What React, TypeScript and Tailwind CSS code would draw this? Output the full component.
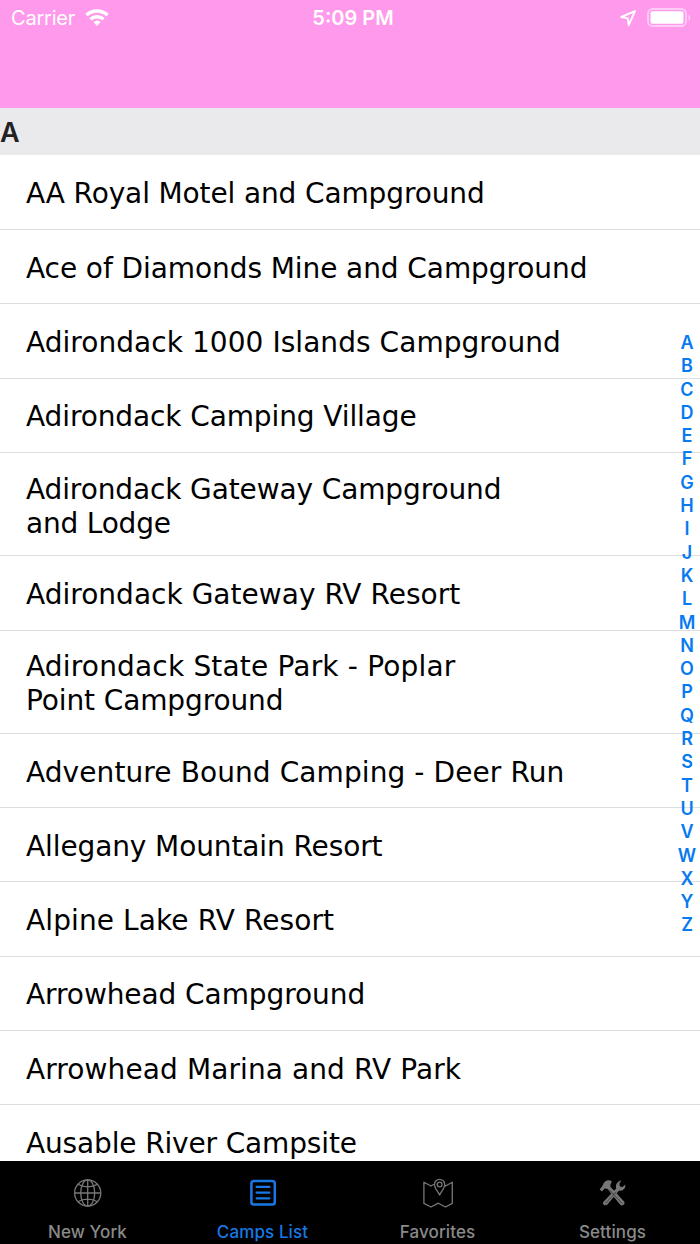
import { useState } from 'react';

interface Line {
  text: string;
  tracking: string;
}

const camps: Line[][] = [
  [{ text: 'AA Royal Motel and Campground', tracking: 'tracking-[-0.13px]' }],
  [{ text: 'Ace of Diamonds Mine and Campground', tracking: 'tracking-[-0.08px]' }],
  [{ text: 'Adirondack 1000 Islands Campground', tracking: 'tracking-[0.05px]' }],
  [{ text: 'Adirondack Camping Village', tracking: 'tracking-[-0.11px]' }],
  [
    { text: 'Adirondack Gateway Campground', tracking: 'tracking-[-0.12px]' },
    { text: 'and Lodge', tracking: 'tracking-[-0.2px]' },
  ],
  [{ text: 'Adirondack Gateway RV Resort', tracking: 'tracking-[0.02px]' }],
  [
    { text: 'Adirondack State Park - Poplar', tracking: 'tracking-[0.18px]' },
    { text: 'Point Campground', tracking: 'tracking-[-0.12px]' },
  ],
  [{ text: 'Adventure Bound Camping - Deer Run', tracking: 'tracking-[0.09px]' }],
  [{ text: 'Allegany Mountain Resort', tracking: 'tracking-[-0.11px]' }],
  [{ text: 'Alpine Lake RV Resort', tracking: 'tracking-[0.1px]' }],
  [{ text: 'Arrowhead Campground', tracking: 'tracking-[-0.08px]' }],
  [{ text: 'Arrowhead Marina and RV Park', tracking: 'tracking-[0.1px]' }],
  [{ text: 'Ausable River Campsite', tracking: 'tracking-[-0.15px]' }],
];

const letters = 'ABCDEFGHIJKLMNOPQRSTUVWXYZ'.split('');

const GlobeIcon = () => (
  <svg width="30" height="30" viewBox="0 0 30 30" fill="none" stroke="currentColor" strokeWidth="1.3">
    <circle cx="14.7" cy="15" r="13.1" />
    <ellipse cx="14.7" cy="15" rx="7" ry="13.1" />
    <path d="M14.7 2v26M1.7 15h26M5 6.3c5.4 3.4 14 3.4 19.4 0M5 23.7c5.4-3.4 14-3.4 19.4 0" />
  </svg>
);

const ListIcon = () => (
  <svg width="30" height="30" viewBox="0 0 30 30" fill="none" stroke="currentColor" strokeWidth="2.5">
    <rect x="3.4" y="3" width="23.4" height="23.6" rx="2.6" />
    <path d="M8.6 8.9h12.8M8.6 14.7h12.8M8.6 20.3h12.8" strokeLinecap="round" strokeWidth="2.2" />
  </svg>
);

const MapIcon = () => (
  <svg width="30" height="30" viewBox="0 0 30 30" fill="none" stroke="currentColor" strokeWidth="1.3" strokeLinejoin="round">
    <path d="M10.8 6.2L8 8 .9 4.2v21.2L8 29l7.3-3.8 7.2 3.8 6.8-3.6V4.2L22.5 8 21.4 7" />
    <path d="M16.6 17c-1.2-3-5.1-6.4-5.1-10.6a5.1 5.1 0 0 1 10.2 0c0 4.2-3.9 7.6-5.1 10.6z" />
    <circle cx="16.6" cy="6.5" r="2.4" />
  </svg>
);

const ToolsIcon = () => (
  <svg width="30" height="30" viewBox="0 0 30 30" fill="currentColor">
    <path d="M1.6 11.4L4 13.4l2.5-2.9 2.8.3 12.8 15.8c1.8 2.6 5.8-.6 4-3L12.4 8.8l.1-2.2 1.4-3.3C10.2 1.3 7.6 2.6 5.6 5.2L4.3 8.3z" />
    <path d="M5.7 23.5L18.2 10.6c-1-4.1 1.3-7.5 5-8L21.4 5.8l.5 2.8 2.7.4 2.6-2.4c.7 4-2.5 6.9-6.1 5.9L9.6 26.2c-2.4 2.7-6.3-.1-3.9-2.7z" />
    <path d="M11 11.5l13.4 14M7.3 25.5l11.1-11.8" stroke="black" strokeOpacity=".65" strokeWidth=".7" fill="none" />
  </svg>
);

const tabs = [
  { name: 'New York', icon: GlobeIcon },
  { name: 'Camps List', icon: ListIcon },
  { name: 'Favorites', icon: MapIcon },
  { name: 'Settings', icon: ToolsIcon },
];

function StatusBar() {
  return (
    <div className="grid h-9 grid-cols-3 items-center text-white font-['Inter',sans-serif]">
      <div className="flex items-center gap-[10px] pl-[11px] text-[20px]">
        <span className="tracking-[-0.2px]">Carrier</span>
        <svg width="24" height="18" viewBox="0 0 24 18" fill="currentColor">
          <path d="M.3 4.8a17 17 0 0 1 23.4 0L21.4 7.6a13.6 13.6 0 0 0-18.8 0z" />
          <path d="M4.3 9a11.2 11.2 0 0 1 15.4 0l-2.3 2.6a7.9 7.9 0 0 0-10.8 0z" />
          <path d="M8.4 13.1a5.4 5.4 0 0 1 7.2 0L12 16.9z" />
        </svg>
      </div>
      <span className="pl-[6px] text-center text-[20px] font-semibold">5:09 PM</span>
      <div className="flex items-center justify-end gap-[10px] pr-[9px]">
        <svg width="18" height="18" viewBox="0 0 18 18" fill="none" stroke="currentColor" strokeWidth="1.9" strokeLinejoin="round">
          <path d="M16 2.2L2.2 8l6.6 1.4.9 6.8z" />
        </svg>
        <svg width="44" height="20" viewBox="0 0 44 20" fill="none">
          <rect x="1" y="1" width="38" height="17" rx="4.5" stroke="white" strokeOpacity=".5" strokeWidth="1.8" />
          <rect x="3.5" y="3.2" width="33" height="12.6" rx="2" fill="white" />
          <path d="M41.5 6.5c2.2 1 2.2 5 0 6z" fill="white" fillOpacity=".5" />
        </svg>
      </div>
    </div>
  );
}

export default function App() {
  const [activeTab, setActiveTab] = useState('Camps List');

  return (
    <div className="relative flex h-[1244px] w-[700px] flex-col overflow-hidden bg-white">
      <header className="h-[108px] shrink-0 bg-[#ff99eb]">
        <StatusBar />
      </header>

      <main className="min-h-0 flex-1 overflow-hidden">
        <h2 className="flex h-[47px] items-center bg-[#eaeaec] pt-1 font-['Inter',sans-serif] text-[27px] font-semibold text-[#222]">
          A
        </h2>
        <ul className="pt-[0.8px] font-['DejaVu_Sans',sans-serif] text-[28px] leading-[34px] text-black">
          {camps.map((lines) => (
            <li
              key={lines[0].text}
              className={`flex flex-col justify-center border-b border-[#dededf] pl-[26px] whitespace-nowrap ${
                lines.length > 1 ? 'h-[103.3px] pt-[5px]' : 'h-[74.3px] pt-[4px]'
              }`}
            >
              {lines.map((line) => (
                <span key={line.text} className={line.tracking}>
                  {line.text}
                </span>
              ))}
            </li>
          ))}
        </ul>
      </main>

      {/* Alphabet index over the list */}
      <nav className="absolute top-[331px] right-[2px] flex w-[22px] flex-col items-center font-['Inter',sans-serif] text-[18px] font-semibold text-[#087aef]">
        {letters.map((letter) => (
          <a key={letter} className="h-[23.3px] leading-[23.3px]">
            {letter}
          </a>
        ))}
      </nav>

      <footer className="grid h-[83px] shrink-0 grid-cols-4 bg-black font-['Inter',sans-serif]">
        {tabs.map(({ name, icon: Icon }) => (
          <button
            key={name}
            onClick={() => setActiveTab(name)}
            className={`flex flex-col items-center pt-[17px] ${activeTab === name ? 'text-[#1978e5]' : 'text-[#8a8a8a]'}`}
          >
            <span className={`h-[30px] ${activeTab === name ? '' : 'text-[#777]'}`}>
              <Icon />
            </span>
            <span className="mt-[12px] text-[17px] leading-[24px] font-medium tracking-[0.1px]">{name}</span>
          </button>
        ))}
      </footer>
    </div>
  );
}
